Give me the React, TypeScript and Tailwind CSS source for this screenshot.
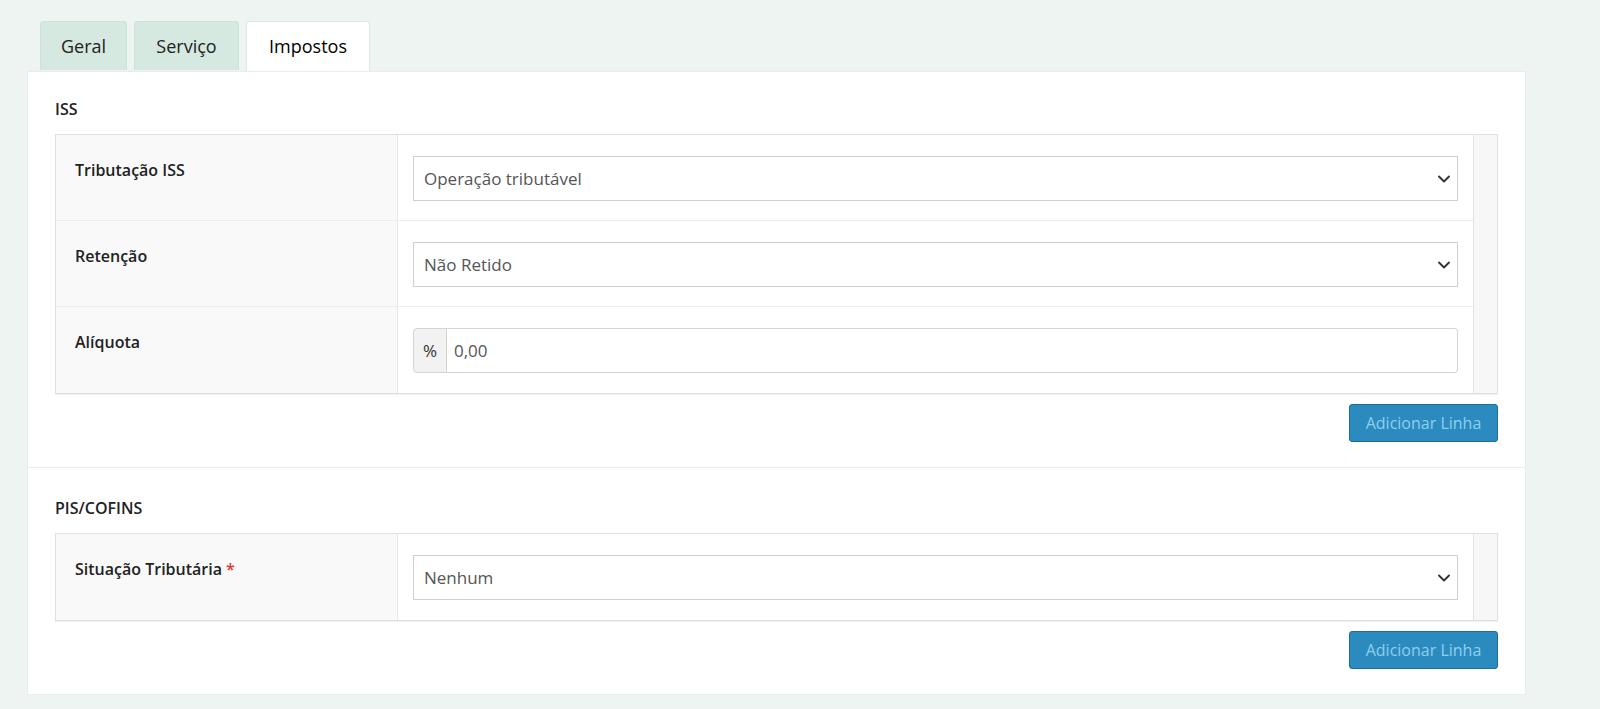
import { ChevronDown } from "lucide-react";

const font = { fontFamily: '"Open Sans", "Noto Sans", Arial, sans-serif' };

function Select({ value }: { value: string }) {
  return (
    <div className="flex h-[45px] items-center justify-between border border-[#cfcfcf] bg-white pl-[10px] pr-[3px] text-[17px] text-[#555]">
      <span>{value}</span>
      <ChevronDown className="h-[20px] w-[20px] text-[#333]" strokeWidth={2.25} />
    </div>
  );
}

function PercentInput({ value }: { value: string }) {
  return (
    <div className="flex h-[45px] text-[17px]">
      <span className="flex w-[34px] items-center justify-center rounded-l-[4px] border border-[#d4d4d4] bg-[#f2f2f2] text-[#333]">
        %
      </span>
      <span className="flex flex-1 items-center rounded-r-[4px] border border-l-0 border-[#d4d4d4] bg-white pl-[7px] text-[#555]">
        {value}
      </span>
    </div>
  );
}

function FieldRow({
  label,
  required,
  children,
  last
}: {
  label: string;
  required?: boolean;
  children: React.ReactNode;
  last?: boolean;
}) {
  return (
    <div className={`flex h-[86px] ${last ? "" : "border-b border-[#ececec]"}`}>
      <div className="w-[342px] shrink-0 border-r border-[#e6e6e6] bg-[#f9f9f9] pl-[19px] pt-[23px] text-[16px] font-semibold leading-[24px] text-[#222]">
        {label}
        {required && <span className="ml-1 text-[#e3342f]">*</span>}
      </div>
      <div className="flex-1 px-[15px] pt-[21px]">{children}</div>
    </div>
  );
}

function Section({
  title,
  rows,
  first
}: {
  title: string;
  rows: Array<{ label: string; required?: boolean; field: React.ReactNode }>;
  first?: boolean;
}) {
  return (
    <div className={`px-[27px] pb-[25px] ${first ? "pt-[27px]" : "border-t border-[#ececec] pt-[30px]"}`}>
      <div className="mb-[14px] text-[16px] font-semibold leading-[21px] text-[#222]">{title}</div>
      <div className="flex border border-[#e0e0e0] shadow-[0_1px_1px_rgba(0,0,0,0.06)]">
        <div className="flex-1">
          {rows.map((row, i) => (
            <FieldRow key={row.label} label={row.label} required={row.required} last={i === rows.length - 1}>
              {row.field}
            </FieldRow>
          ))}
        </div>
        <div className="w-[24px] shrink-0 border-l border-[#e3e3e3] bg-[#f7f7f7]" />
      </div>
      <div className="mt-[10px] flex justify-end">
        <button className="h-[38px] w-[149px] rounded-[3px] border border-[#1d6e98] bg-[#2b8bbe] text-[16px] text-[#8fcfee]">
          Adicionar Linha
        </button>
      </div>
    </div>
  );
}

export default function App() {
  return (
    <div className="min-h-screen bg-[#eef4f1] pl-[27px] pr-[74px] pt-[21px]" style={font}>
      <div className="flex gap-[7px] pl-[13px]">
        <div className="flex h-[49px] w-[87px] items-center justify-center rounded-t-[4px] border border-b-0 border-[#cde2d8] bg-[#d5e9e0] text-[18px] text-[#222]">
          Geral
        </div>
        <div className="flex h-[49px] w-[105px] items-center justify-center rounded-t-[4px] border border-b-0 border-[#cde2d8] bg-[#d5e9e0] text-[18px] text-[#222]">
          Serviço
        </div>
        <div className="flex h-[50px] w-[124px] items-center justify-center rounded-t-[4px] border border-b-0 border-[#dce8e3] bg-white text-[18px] font-medium text-black">
          Impostos
        </div>
      </div>
      <div className="border border-[#e6eeea] bg-white">
        <Section
          first
          title="ISS"
          rows={[
            { label: "Tributação ISS", field: <Select value="Operação tributável" /> },
            { label: "Retenção", field: <Select value="Não Retido" /> },
            { label: "Alíquota", field: <PercentInput value="0,00" /> }
          ]}
        />
        <Section
          title="PIS/COFINS"
          rows={[{ label: "Situação Tributária", required: true, field: <Select value="Nenhum" /> }]}
        />
      </div>
    </div>
  );
}
